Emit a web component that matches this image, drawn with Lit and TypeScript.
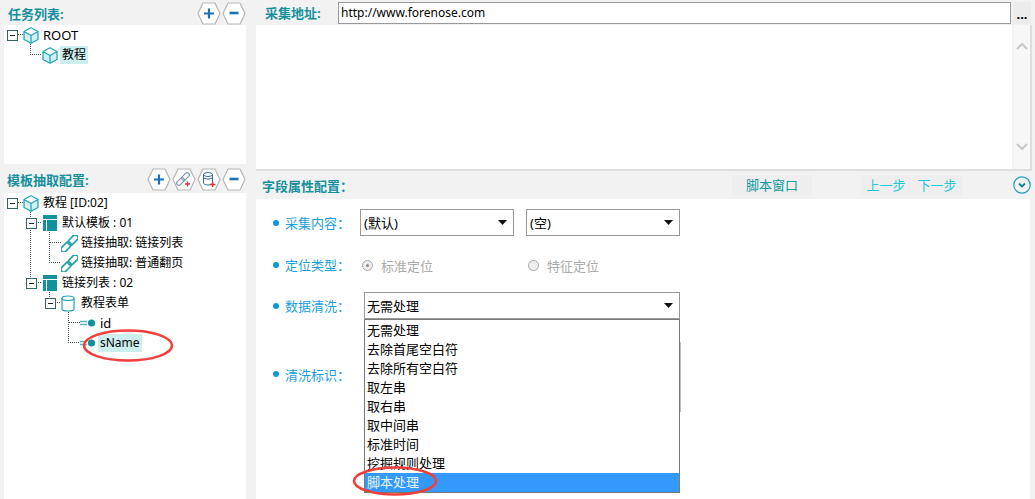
import { LitElement, html, css, svg } from "lit";
import { customElement } from "lit/decorators.js";

const cube = html`<svg width="16" height="17" viewBox="0 0 16 17"><path d="M8 8.5 15 4.5V12.5L8 16.3 1 12.5V4.5Z" fill="#d3f1f3"/><path d="M8 8.5 15 4.5 8 .8 1 4.5Z" fill="#fff"/><path d="M8 .8 15 4.5V12.5L8 16.3 1 12.5V4.5ZM1 4.5 8 8.5 15 4.5M8 8.5V16.3" fill="none" stroke="#1fa9b6" stroke-width="1.3" stroke-linejoin="round"/></svg>`;
const table = html`<svg width="16" height="16" viewBox="0 0 16 16"><path d="M1 0H15V4H1ZM1 5H4V16H1ZM5 5H15V16H5Z" fill="#12919d"/></svg>`;
const link = html`<svg width="17" height="17" viewBox="0 0 17 17"><g transform="rotate(-45 8.5 8.5)" fill="none" stroke="#1fa3b0" stroke-width="1.7"><rect x="-2.5" y="5.7" width="12" height="5.6" rx="2.8"/><rect x="7.5" y="5.7" width="12" height="5.6" rx="2.8"/></g></svg>`;
const cyl = html`<svg width="16" height="17" viewBox="0 0 16 17"><path d="M1 3.5V14Q1 16 7 16T13 14V3.5" fill="#fff" stroke="#1fa3b0" stroke-width="1.2"/><path d="M1 3.5Q1 1 7 1T13 3.5Q13 5.5 7 5.5T1 3.5Z" fill="#fff" stroke="#1fa3b0" stroke-width="1.2"/></svg>`;
const field = html`<svg width="16" height="16" viewBox="0 0 16 16"><path d="M0 6.5H7M0 9.5H7" stroke="#5bb7c0" stroke-width="1.5"/><circle cx="11.5" cy="8" r="3.6" fill="#12919d"/></svg>`;

const hexIcons: Record<string, unknown> = {
  plus: svg`<path d="M7 11.5H17M12 6.5V16.5" stroke="#1c6fb8" stroke-width="2.2"/>`,
  minus: svg`<path d="M7.5 11H16.5" stroke="#1c6fb8" stroke-width="2.6"/>`,
  link: svg`<g transform="rotate(-45 11 11)" fill="none" stroke="#7f93b5" stroke-width="1.1"><rect x="3" y="8.8" width="9" height="4.4" rx="2.2"/><rect x="10" y="8.8" width="9" height="4.4" rx="2.2"/></g><path d="M13 16H18M15.5 13.5V18.5" stroke="#e2303a" stroke-width="1.3"/>`,
  db: svg`<path d="M6.5 6.5V15Q6.5 17 11 17T15.5 15V6.5" fill="none" stroke="#3b6aa8"/><ellipse cx="11" cy="6.5" rx="4.5" ry="2" fill="none" stroke="#3b6aa8"/><path d="M6.5 10Q11 12.5 15.5 10" fill="none" stroke="#3b6aa8"/><path d="M13 16.5H18.5M15.7 14V19" stroke="#e2303a" stroke-width="1.4"/>`,
};
const hex = (k: string) => html`<svg class="hex" width="24" height="23" viewBox="0 0 24 23"><path d="M6 1H18L23 11.5 18 22H6L1 11.5Z" fill="#fff" stroke="#b5b5b5" stroke-width="1.2" stroke-linejoin="round"/>${hexIcons[k]}</svg>`;

type Node = { l: number; t: boolean; i: unknown; s: string; cur?: boolean; big?: boolean };
const tree1: Node[] = [
  { l: 0, t: true, i: cube, s: "ROOT", big: true },
  { l: 1, t: false, i: cube, s: "教程", cur: true },
];
const tree2: Node[] = [
  { l: 0, t: true, i: cube, s: "教程 [ID:02]" },
  { l: 1, t: true, i: table, s: "默认模板 : 01" },
  { l: 2, t: false, i: link, s: "链接抽取: 链接列表" },
  { l: 2, t: false, i: link, s: "链接抽取: 普通翻页" },
  { l: 1, t: true, i: table, s: "链接列表 : 02" },
  { l: 2, t: true, i: cyl, s: "教程表单" },
  { l: 3, t: false, i: field, s: "id", big: true },
  { l: 3, t: false, i: field, s: "sName", cur: true },
];
const options = ["无需处理", "去除首尾空白符", "去除所有空白符", "取左串", "取右串", "取中间串", "标准时间", "挖掘规则处理", "脚本处理"];

const lines1 = "M13.5 9.5H19M26.5 17V29.5H38";
const lines2 = "M13.5 9.5H19M26.5 17V89M31.5 29.5H38M31.5 89.5H38M45.5 37V69.5H57M45.5 49.5H57M45.5 97V104M50.5 109.5H57M64.5 117V149.5H76M64.5 129.5H76";

@customElement("app-root")
export class AppRoot extends LitElement {
  static styles = css`
    :host { display: block; width: 1035px; height: 499px; background: #f2f2f2; overflow: hidden; position: relative;
      font-family: "Noto Sans", "Noto Sans CJK SC", sans-serif; font-size: 13px; color: #000; }
    .page { display: grid; grid-template-columns: 246px 1fr; column-gap: 10px; height: 499px; }
    .left { display: flex; flex-direction: column; }
    .lh { display: flex; align-items: center; justify-content: space-between; padding: 1px 0 0 8px; height: 24px; box-sizing: border-box; font-weight: 700; color: #16909e; }
    .lh.first { margin-top: 1px; }
    .lh.b { height: 29px; padding: 1px 0 0 7px; }
    .btns { display: flex; }
    .hex { display: block; margin-left: 1px; }
    .tree { background: #fff; margin-left: 4px; position: relative; }
    .tree.a { height: 139px; }
    .tree.z { flex: 1; }
    .tree svg.lines { position: absolute; left: 0; top: 0; width: 242px; height: 200px; pointer-events: none; }
    .row { display: flex; align-items: center; height: 20px; white-space: nowrap; }
    .tg { width: 16px; flex: none; }
    .box { display: block; width: 9px; height: 9px; border: 1px solid #3b6064; position: relative; background: #fff; }
    .box::after { content: ""; position: absolute; left: 2px; top: 4px; width: 5px; height: 1px; background: #222; }
    .ic { width: 16px; height: 16px; flex: none; position: relative; z-index: 1; display: flex; align-items: center; }
    .ic svg { display: block; flex: none; }
    .tx { margin-left: 2px; padding: 0 2px; height: 18px; line-height: 18px; font-size: 12px; }
    .tx.big { font-size: 13px; }
    .tx.cur { background: #cdeeee; }
    .right { display: flex; flex-direction: column; min-width: 0; }
    .top { height: 25px; display: flex; align-items: center; padding-right: 4px; }
    .top .lbl { width: 82px; padding-left: 9px; box-sizing: border-box; font-weight: 700; color: #16909e; }
    .url { width: 673px; height: 22px; box-sizing: border-box; border: 1px solid #999; background: #fff; line-height: 20px; padding-left: 2px; font-size: 12px; }
    .dots { width: 18px; height: 22px; margin-left: 2px; background: #ececec; text-align: center; font-weight: 700; line-height: 24px; }
    .area { height: 144px; display: flex; border-bottom: 2px solid #dedede; border-right: 2px solid #dedede; width: 774px; box-sizing: content-box; }
    .area .txt { flex: 1; background: #fff; }
    .sb { width: 17px; margin-left: 1px; background: #f7f7f7; display: flex; flex-direction: column; align-items: center; justify-content: space-between; padding: 17px 0 18px; box-sizing: border-box; }
    .hdr { height: 28px; display: flex; align-items: center; padding-left: 6px; font-weight: 700; color: #16909e; }
    .hdr .t { width: 470px; }
    .hb { font-weight: 400; background: #eeeeee; height: 20px; line-height: 20px; text-align: center; }
    .hb.s { width: 80px; color: #0f9aa0; margin-right: 49px; }
    .hb.n { width: 50px; color: #1cc8dc; margin-right: 1px; }
    .cir { margin-left: 50px; display: block; }
    .form { background: #fff; flex: 1; margin-right: 5px; padding-top: 10px; position: relative; }
    .fr { display: flex; align-items: center; padding-left: 17px; color: #1a9edb; }
    .fr::before { content: ""; width: 6px; height: 6px; border-radius: 50%; background: #0c97d8; margin-right: 6px; flex: none; }
    .fr .lab { width: 75px; flex: none; }
    .sel { width: 154px; height: 27px; box-sizing: border-box; border: 1px solid #999; display: flex; align-items: center; justify-content: space-between; padding: 0 6px 0 3px; color: #000; background: #fff; }
    .sel + .sel { margin-left: 12px; }
    .sel.w { width: 316px; margin-left: 4px; padding-left: 2px; }
    .r2 { height: 20px; margin-top: 19px; }
    .r2 .lab { margin-bottom: 2px; }
    .rad { display: flex; align-items: center; color: #aaa; }
    .rad i { width: 11px; height: 11px; box-sizing: border-box; margin: 0 8px 0 2px; border-radius: 50%; border: 1px solid #a8a8a8; background: #eee; position: relative; flex: none; }
    .rad i.on::after { content: ""; position: absolute; left: 3px; top: 3px; width: 3px; height: 3px; border-radius: 50%; background: #888; }
    .rad.first { width: 166px; }
    .r3 { margin-top: 17px; }
    .r4 { margin-top: 23px; }
    .r4::before { margin-bottom: 6px; }
    .r4 .lab { margin-bottom: 6px; }
    .ta { width: 317px; height: 70px; margin-left: 4px; box-sizing: border-box; border: 1px solid #bdbdbd; background: #fff; }
    .menu { position: absolute; left: 108px; top: 120px; width: 316px; box-sizing: border-box; border: 1px solid #7a7a7a; background: #fff; color: #000; z-index: 2; padding-top: 1px; }
    .menu div { height: 19px; line-height: 19px; padding-left: 2px; }
    .menu div.hi { background: #3399ff; color: #e8f4ff; }
    .ell { position: absolute; left: 0; top: 0; width: 1035px; height: 499px; pointer-events: none; z-index: 3; }
  `;

  renderTree(nodes: Node[], d: string, cls: string) {
    return html`<div class="tree ${cls}">
      <svg class="lines"><path d=${d} fill="none" stroke="#3d5558" stroke-dasharray="1 1" shape-rendering="crispEdges"/></svg>
      ${nodes.map(n => html`<div class="row" style="padding-left:${3 + n.l * 19}px">
        <span class="tg">${n.t ? html`<span class="box"></span>` : ""}</span>
        <span class="ic">${n.i}</span>
        <span class="tx ${n.cur ? "cur" : ""} ${n.big ? "big" : ""}">${n.s}</span>
      </div>`)}
    </div>`;
  }

  render() {
    const arrow = html`<svg width="9" height="5" viewBox="0 0 9 5"><path d="M0 0H9L4.5 5Z" fill="#111"/></svg>`;
    return html`<div class="page">
      <div class="left">
        <div class="lh first"><span>任务列表:</span><span class="btns">${hex("plus")}${hex("minus")}</span></div>
        ${this.renderTree(tree1, lines1, "a")}
        <div class="lh b"><span>模板抽取配置:</span><span class="btns">${hex("plus")}${hex("link")}${hex("db")}${hex("minus")}</span></div>
        ${this.renderTree(tree2, lines2, "z")}
      </div>
      <div class="right">
        <div class="top"><span class="lbl">采集地址:</span><div class="url">http://www.forenose.com</div><div class="dots">...</div></div>
        <div class="area"><div class="txt"></div><div class="sb">
          <svg width="12" height="8" viewBox="0 0 12 8"><path d="M1 7 6 2 11 7" fill="none" stroke="#c8c8c8" stroke-width="2"/></svg>
          <svg width="12" height="8" viewBox="0 0 12 8"><path d="M1 1 6 6 11 1" fill="none" stroke="#c8c8c8" stroke-width="2"/></svg>
        </div></div>
        <div class="hdr"><span class="t">字段属性配置：</span><span class="hb s">脚本窗口</span><span class="hb n">上一步</span><span class="hb n">下一步</span>
          <svg class="cir" width="18" height="18" viewBox="0 0 18 18"><circle cx="9" cy="9" r="8.2" fill="none" stroke="#1fa3b0" stroke-width="1.2"/><path d="M6 7.5 9 10.5 12 7.5" fill="none" stroke="#0f7f8c" stroke-width="1.8"/></svg>
        </div>
        <div class="form">
          <div class="fr"><span class="lab">采集内容：</span><div class="sel"><span>(默认)</span>${arrow}</div><div class="sel"><span>(空)</span>${arrow}</div></div>
          <div class="fr r2"><span class="lab">定位类型：</span><span class="rad first"><i class="on"></i>标准定位</span><span class="rad"><i></i>特征定位</span></div>
          <div class="fr r3"><span class="lab">数据清洗：</span><div class="sel w"><span>无需处理</span>${arrow}</div></div>
          <div class="fr r4"><span class="lab">清洗标识：</span><div class="ta"></div></div>
          <div class="menu">${options.map((o, i) => html`<div class=${i === 8 ? "hi" : ""}>${o}</div>`)}</div>
        </div>
      </div>
    </div>
    <svg class="ell"><ellipse cx="128" cy="345.5" rx="44" ry="15" fill="none" stroke="#f0403c" stroke-width="2.6"/><ellipse cx="395" cy="481" rx="41" ry="13.5" fill="none" stroke="#f0403c" stroke-width="2.6"/></svg>`;
  }
}
